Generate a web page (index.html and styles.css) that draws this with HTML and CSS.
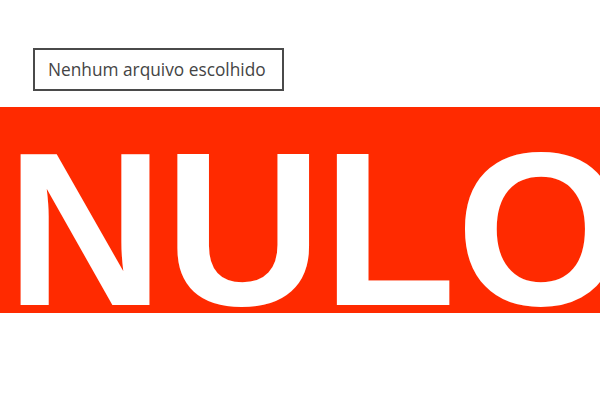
FILE: index.html
```html
<!DOCTYPE html>
<html lang="pt">
<head>
<meta charset="utf-8">
<title>Arquivo</title>
<link rel="stylesheet" href="styles.css">
</head>
<body>
<div class="page">
  <div class="upload">
    <div class="file-box">Nenhum arquivo escolhido</div>
  </div>
  <div class="banner">
    <span class="banner-text">NULO</span>
  </div>
</div>
</body>
</html>
```

FILE: styles.css
```css
html, body {
  margin: 0;
  padding: 0;
  background: #ffffff;
}

.page {
  width: 600px;
  height: 412px;
  overflow: hidden;
  display: flex;
  flex-direction: column;
}

.upload {
  flex-shrink: 0;
  padding: 48px 0 16px 33px;
}

.file-box {
  width: 251px;
  height: 43px;
  box-sizing: border-box;
  border: 2px solid #4a4a4a;
  display: flex;
  align-items: center;
  padding-left: 13px;
  font-family: "Open Sans", "Noto Sans", sans-serif;
  font-size: 17.3px;
  color: #444444;
  white-space: nowrap;
}

.banner {
  flex-shrink: 0;
  height: 206px;
  background: #ff2a00;
  overflow: hidden;
  white-space: nowrap;
  padding-left: 6px;
}

.banner-text {
  font-family: "Liberation Sans", Arial, sans-serif;
  font-weight: bold;
  font-size: 219px;
  line-height: 244px;
  color: #ffffff;
  display: block;
}
```
